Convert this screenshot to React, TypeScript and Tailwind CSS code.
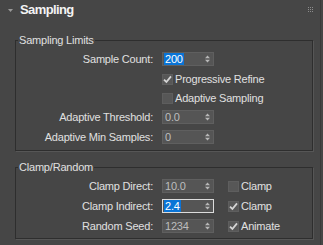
import React from "react";

function Spinner({ value, selected, focused }: { value: string; selected?: boolean; focused?: boolean }) {
  return (
    <div
      className={`relative w-[52px] h-[14px] border ${
        focused ? "border-[#dcdcdc]" : "border-[#5f5f5f]"
      } bg-[#555555] flex items-center`}
    >
      <span
        className={`ml-[1px] px-[1px] h-[12px] leading-[12px] ${
          selected ? "bg-[#0a74d6] text-white" : "text-[#bdbdbd]"
        }`}
      >
        {value}
      </span>
      <svg className="absolute right-[3px] top-[2px]" width="5" height="8" viewBox="0 0 5 8">
        <path d="M0 3.2 L2.5 0.6 L5 3.2Z M0 4.8 L5 4.8 L2.5 7.4Z" fill="#b8b8b8" />
      </svg>
    </div>
  );
}

function Check({ checked, label }: { checked?: boolean; label: string }) {
  return (
    <div className="flex items-center">
      <div className="w-[11px] h-[11px] bg-[#575757] border border-[#5e5e5e] flex items-center justify-center">
        {checked && (
          <svg width="9" height="9" viewBox="0 0 9 9">
            <path d="M1 4.6 L3.4 7 L8 1.4" stroke="#d4d4d4" strokeWidth="1.8" fill="none" />
          </svg>
        )}
      </div>
      <span className="ml-[2px]">{label}</span>
    </div>
  );
}

function Group({ title, children, className }: { title: string; children: React.ReactNode; className?: string }) {
  return (
    <div
      className={`relative ml-[15px] w-[298px] border border-[#2e2e2e] shadow-[1px_1px_0_#565656] ${className ?? ""}`}
    >
      <span className="absolute left-[2px] top-[-8px] bg-[#464646] px-[1px] leading-[14px] text-[#e0e0e0]">
        {title}
      </span>
      {children}
    </div>
  );
}

function LabelRow({ label, children, h = "h-[20px]" }: { label: string; children: React.ReactNode; h?: string }) {
  return (
    <div className={`flex items-center ${h}`}>
      <div className="w-[137px] text-right">{label}</div>
      <div className="ml-[9px] flex items-center">{children}</div>
    </div>
  );
}

export default function App() {
  return (
    <div className="w-[323px] h-[245px] bg-[#464646] overflow-hidden font-['Liberation_Sans',Arial,sans-serif] text-[11px] tracking-[-0.2px] text-[#e0e0e0]">
      <div className="w-[321px] h-[245px] border-r border-[#3a3a3a]">
        <div className="relative h-[20px] flex items-center">
          <svg className="ml-[8px]" width="5" height="3" viewBox="0 0 5 3">
            <path d="M0 0 L5 0 L2.5 3Z" fill="#9a9a9a" />
          </svg>
          <span className="ml-[7px] font-bold text-[13px] tracking-[-0.6px] text-[#f4f4f4]">Sampling</span>
          <div className="absolute left-[308px] top-[7px] grid grid-cols-3 gap-[1px]">
            {Array.from({ length: 9 }).map((_, i) => (
              <div key={i} className="w-[1px] h-[1px] bg-[#8c8c8c]" />
            ))}
          </div>
        </div>

        <Group title="Sampling Limits" className="mt-[20px] pt-[8px] pb-[3px]">
          <LabelRow label="Sample Count:">
            <Spinner value="200" selected />
          </LabelRow>
          <div className="h-[20px] flex items-center pl-[146px]">
            <Check checked label="Progressive Refine" />
          </div>
          <div className="h-[18px] flex items-center pl-[146px]">
            <Check label="Adaptive Sampling" />
          </div>
          <LabelRow label="Adaptive Threshold:">
            <Spinner value="0.0" />
          </LabelRow>
          <LabelRow label="Adaptive Min Samples:">
            <Spinner value="0" />
          </LabelRow>
        </Group>

        <Group title="Clamp/Random" className="mt-[16px] pt-[8px] pb-[2px]">
          <LabelRow label="Clamp Direct:">
            <Spinner value="10.0" />
            <div className="ml-[14px]">
              <Check label="Clamp" />
            </div>
          </LabelRow>
          <LabelRow label="Clamp Indirect:">
            <Spinner value="2.4" selected focused />
            <div className="ml-[14px]">
              <Check checked label="Clamp" />
            </div>
          </LabelRow>
          <LabelRow label="Random Seed:">
            <Spinner value="1234" />
            <div className="ml-[14px]">
              <Check checked label="Animate" />
            </div>
          </LabelRow>
        </Group>
      </div>
    </div>
  );
}
